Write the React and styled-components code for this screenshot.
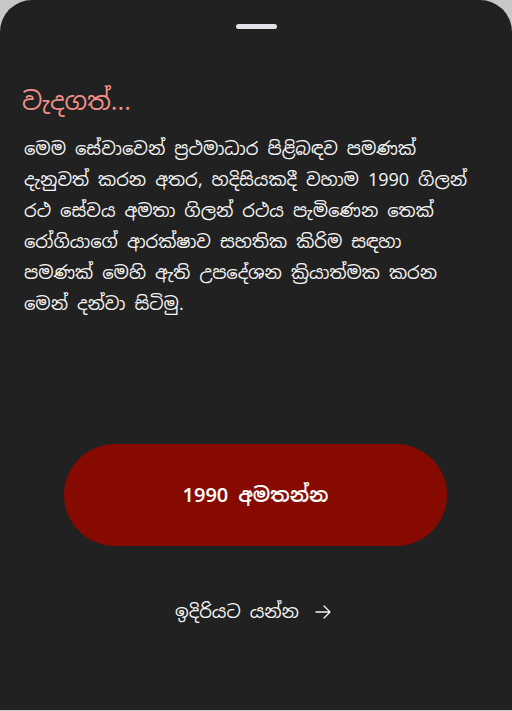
import React from "react";
import styled, { createGlobalStyle } from "styled-components";

const GlobalStyle = createGlobalStyle`
  html, body {
    margin: 0;
    padding: 0;
    background: #c8c8c8;
  }
  body {
    font-family: "Noto Sans Sinhala", "Noto Sans", "DejaVu Sans", sans-serif;
  }
`;

const Sheet = styled.div`
  width: 512px;
  height: 710px;
  background: #212121;
  border-radius: 32px 32px 0 0;
  box-sizing: border-box;
  display: flex;
  flex-direction: column;
  align-items: stretch;
  padding: 24px 24px 0;
  color: #f2f2f2;
`;

const Handle = styled.div`
  align-self: center;
  width: 41px;
  height: 5px;
  border-radius: 3px;
  background: #e2e0e8;
`;

const Title = styled.h2`
  margin: 54px 0 0 -2px;
  font-size: 25px;
  font-weight: 400;
  line-height: 36px;
  color: #f08f86;
`;

const Body = styled.p`
  margin: 14px 0 0;
  font-size: 18px;
  line-height: 31px;
  color: #f4f4f4;
`;

const CallButton = styled.button`
  align-self: center;
  margin: 125px 0 0 -1px;
  width: 383px;
  height: 102px;
  border: none;
  border-radius: 51px;
  background: #870a00;
  color: #ffffff;
  font-family: inherit;
  font-size: 20px;
  font-weight: 600;
  cursor: pointer;
`;

const NextLink = styled.div`
  align-self: center;
  margin: 54px 0 0 -6px;
  display: flex;
  align-items: center;
  gap: 16px;
  font-size: 18px;
  color: #f4f4f4;
`;

const Arrow = () => (
  <svg width="16" height="14" viewBox="0 0 16 14" fill="none">
    <path d="M1 7h14M9 1l6 6-6 6" stroke="#f4f4f4" strokeWidth="1.3" strokeLinecap="round" strokeLinejoin="round" />
  </svg>
);

export default function App() {
  return (
    <>
      <GlobalStyle />
      <Sheet>
        <Handle />
        <Title>වැදගත්...</Title>
        <Body>
          මෙම සේවාවෙන් ප්‍රථමාධාර පිළිබඳව පමණක්
          <br />
          දැනුවත් කරන අතර, හදිසියකදී වහාම 1990 ගිලන්
          <br />
          රථ සේවය අමතා ගිලන් රථය පැමිණෙන තෙක්
          <br />
          රෝගියාගේ ආරක්ෂාව සහතික කිරිම සඳහා
          <br />
          පමණක් මෙහි ඇති උපදේශන ක්‍රියාත්මක කරන
          <br />
          මෙන් දන්වා සිටිමු.
        </Body>
        <CallButton>1990 අමතන්න</CallButton>
        <NextLink>
          <span>ඉදිරියට යන්න</span>
          <Arrow />
        </NextLink>
      </Sheet>
    </>
  );
}
